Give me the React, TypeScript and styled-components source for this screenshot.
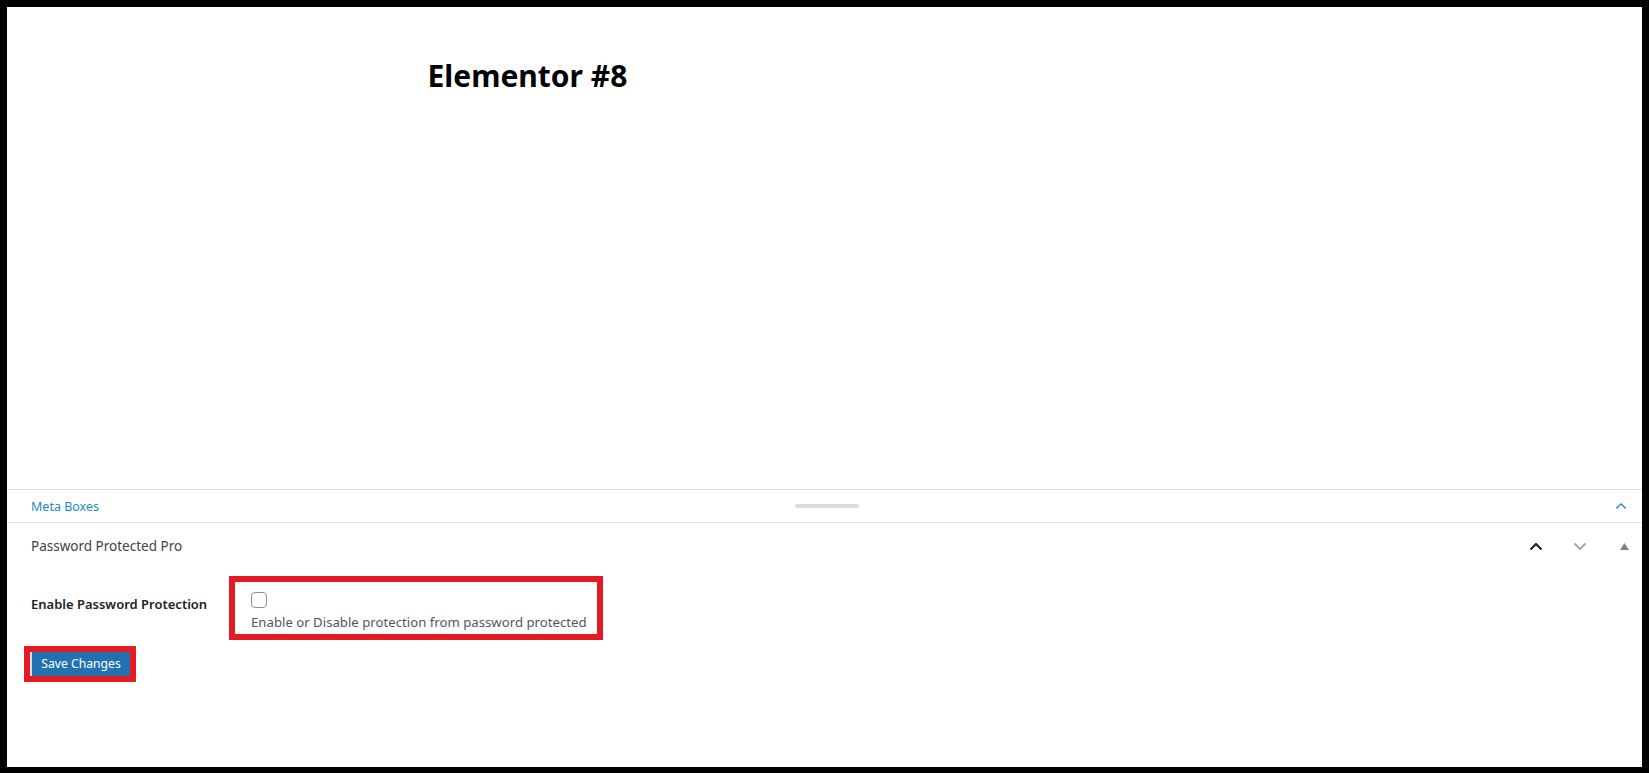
import React from "react";
import styled, { createGlobalStyle } from "styled-components";

const Global = createGlobalStyle`
  html, body { margin: 0; padding: 0; background: #fff; }
  body { font-family: "Noto Sans", "Open Sans", sans-serif; }
  * { box-sizing: border-box; }
`;

const Frame = styled.div`
  width: 1649px;
  height: 773px;
  border-style: solid;
  border-color: #000;
  border-width: 7px 7px 6px 7px;
  display: flex;
  flex-direction: column;
  background: #fff;
  overflow: hidden;
`;

const Canvas = styled.div`
  height: 482px;
  padding-top: 51px;
`;

const Column = styled.div`
  width: 792px;
  margin: 0 auto;
`;

const Title = styled.h1`
  margin: 0 0 0 -1px;
  font-family: "Noto Sans", sans-serif;
  font-weight: 700;
  font-size: 30px;
  line-height: 36px;
  color: #000;
`;

const MetaHeader = styled.div`
  height: 34px;
  border-top: 1px solid #e0e0e0;
  border-bottom: 1px solid #e0e0e0;
  display: grid;
  grid-template-columns: 1fr auto 1fr;
  align-items: center;
  padding: 0 15px 0 20px;
`;

const MetaTitle = styled.span`
  padding-left: 4px;
  font-size: 12.5px;
  color: #1e88c7;
`;

const DragHandle = styled.span`
  width: 64px;
  height: 4px;
  border-radius: 2px;
  background: #ddd;
`;

const RightSlot = styled.div`
  display: flex;
  justify-content: flex-end;
  align-items: center;
`;

const PostboxHeader = styled.div`
  height: 46px;
  display: flex;
  align-items: center;
  justify-content: space-between;
  padding-left: 24px;
`;

const PostboxTitle = styled.h2`
  margin: 0;
  font-size: 13.5px;
  font-weight: 400;
  color: #3c434a;
`;

const HandleActions = styled.div`
  display: flex;
  gap: 8px;
  align-items: center;
`;

const HandleButton = styled.button`
  width: 36px;
  height: 36px;
  padding: 0;
  border: 0;
  background: transparent;
  display: flex;
  align-items: center;
  justify-content: center;
`;

const FormArea = styled.div`
  padding-left: 24px;
`;

const FormRow = styled.div`
  display: flex;
  align-items: flex-start;
  padding-top: 7px;
`;

const FieldLabel = styled.label`
  width: 198px;
  padding-top: 18px;
  font-size: 13px;
  font-weight: 600;
  line-height: 20px;
  color: #1d2327;
`;

const FieldCell = styled.div`
  border: 6px solid #e31b23;
  padding: 10px 10px 3px 16px;
  display: flex;
  flex-direction: column;
  gap: 5px;
`;

const CheckBox = styled.input`
  appearance: none;
  margin: 0;
  width: 16px;
  height: 16px;
  border: 1px solid #8c8f94;
  border-radius: 4px;
  background: #fff;
`;

const Description = styled.p`
  margin: 0;
  font-size: 13.2px;
  line-height: 18px;
  color: #50575e;
`;

const SubmitRow = styled.div`
  padding-top: 11px;
`;

const SaveButton = styled.button`
  width: 100px;
  height: 24px;
  margin-left: -1px;
  padding: 0;
  border: 0;
  border-left: 2px solid #cfe0ef;
  background: #2271b1;
  color: #fff;
  font-family: "Noto Sans", sans-serif;
  font-size: 12.2px;
  line-height: 24px;
  outline: 6px solid #e31b23;
`;

const ChevronUp = ({ color, w, sw }: { color: string; w: number; sw: number }) => (
  <svg width={w} height={w / 2 + 2} viewBox="0 0 14 9" fill="none">
    <path d="M1.5 7.5 L7 2 L12.5 7.5" stroke={color} strokeWidth={sw} />
  </svg>
);

const ChevronDown = ({ color }: { color: string }) => (
  <svg width="14" height="9" viewBox="0 0 14 9" fill="none">
    <path d="M1.5 1.5 L7 7 L12.5 1.5" stroke={color} strokeWidth="2" />
  </svg>
);

const Triangle = () => (
  <svg width="9" height="7" viewBox="0 0 9 7">
    <path d="M4.5 0 L9 7 L0 7 Z" fill="#7e8287" />
  </svg>
);

export default function App() {
  return (
    <>
      <Global />
      <Frame>
        <Canvas>
          <Column>
            <Title>Elementor #8</Title>
          </Column>
        </Canvas>
        <MetaHeader>
          <MetaTitle>Meta Boxes</MetaTitle>
          <DragHandle />
          <RightSlot>
            <ChevronUp color="#1e88c7" w={12} sw={1.6} />
          </RightSlot>
        </MetaHeader>
        <PostboxHeader>
          <PostboxTitle>Password Protected Pro</PostboxTitle>
          <HandleActions>
            <HandleButton aria-label="Move up">
              <ChevronUp color="#1e1e1e" w={14} sw={2} />
            </HandleButton>
            <HandleButton aria-label="Move down">
              <ChevronDown color="#a7aaad" />
            </HandleButton>
            <HandleButton aria-label="Toggle panel">
              <Triangle />
            </HandleButton>
          </HandleActions>
        </PostboxHeader>
        <FormArea>
          <FormRow>
            <FieldLabel htmlFor="ppp-enable">Enable Password Protection</FieldLabel>
            <FieldCell>
              <CheckBox id="ppp-enable" type="checkbox" />
              <Description>Enable or Disable protection from password protected</Description>
            </FieldCell>
          </FormRow>
          <SubmitRow>
            <SaveButton type="button">Save Changes</SaveButton>
          </SubmitRow>
        </FormArea>
      </Frame>
    </>
  );
}
